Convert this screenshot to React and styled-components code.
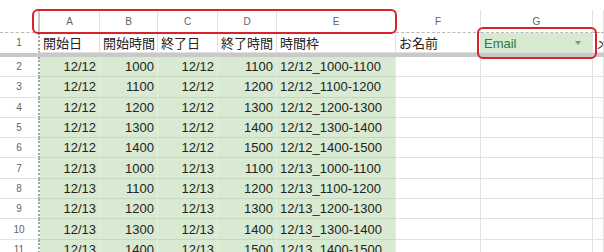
import React from 'react'
import styled, { createGlobalStyle } from 'styled-components'

const GlobalStyle = createGlobalStyle`
  html, body {
    margin: 0;
    padding: 0;
    background: #fff;
    overflow: hidden;
  }
  body {
    font-family: Arial, "Liberation Sans", "Noto Sans CJK JP", sans-serif;
  }
`

const COLS = '40px 60px 58px 60px 59px 119px 85px 112px 1fr'

const Sheet = styled.div`
  position: relative;
  width: 604px;
  height: 252px;
  overflow: hidden;
  padding-top: 10px;
  box-sizing: border-box;
`

const Row = styled.div`
  display: grid;
  grid-template-columns: ${COLS};
  height: ${p => p.$h}px;
`

const ColHead = styled.div`
  box-sizing: border-box;
  display: flex;
  align-items: center;
  justify-content: center;
  font-size: 10px;
  color: #5f6368;
  border-right: ${p => (p.$corner ? '2px solid #c4c4c4' : '1px solid #e1e1e1')};
  border-bottom: 1px dashed #b8b8b8;
`

const RowNum = styled.div`
  box-sizing: border-box;
  display: flex;
  align-items: center;
  justify-content: center;
  font-size: 10px;
  color: #5f6368;
  border-right: 2px dotted #a3a3a3;
  border-bottom: 1px solid ${p => (p.$last ? 'transparent' : '#e1e1e1')};
`

const Cell = styled.div`
  box-sizing: border-box;
  display: flex;
  align-items: center;
  justify-content: ${p => (p.$right ? 'flex-end' : 'flex-start')};
  padding: 0 3px;
  font-size: 13px;
  color: #222;
  white-space: nowrap;
  overflow: hidden;
  background: ${p => (p.$green ? '#d9ead3' : '#fff')};
  border-right: 1px solid ${p => (p.$green ? '#e6efe2' : '#e1e1e1')};
  border-bottom: 1px solid ${p => (p.$green ? '#c6d8bf' : '#e1e1e1')};
`

const Frozen = styled.div`
  height: 4px;
  background: #c9c9c9;
`

const Chip = styled.div`
  box-sizing: border-box;
  display: flex;
  align-items: center;
  justify-content: space-between;
  padding: 0 11px 0 3px;
  font-size: 13px;
  color: #2b7a45;
  background: #d6e9d1;
  border-right: 1px solid #e1e1e1;
`

const Caret = styled.span`
  width: 0;
  height: 0;
  border-left: 3.5px solid transparent;
  border-right: 3.5px solid transparent;
  border-top: 4px solid #7d9a80;
`

const Outline = styled.div`
  position: absolute;
  left: ${p => p.$x}px;
  top: ${p => p.$y}px;
  width: ${p => p.$w}px;
  height: ${p => p.$h}px;
  box-sizing: border-box;
  border: 2px solid #d8232a;
  border-radius: 6px;
  pointer-events: none;
`

const letters = ['A', 'B', 'C', 'D', 'E', 'F', 'G', '']
const titles = ['開始日', '開始時間', '終了日', '終了時間', '時間枠', 'お名前']

const rows = []
const days = ['12/12', '12/13']
days.forEach(d => {
  ;[1000, 1100, 1200, 1300, 1400].forEach(t => {
    rows.push([d, t, d, t + 100, `${d}_${t}-${t + 100}`])
  })
})

function App() {
  return (
    <Sheet>
      <GlobalStyle />
      <Row $h={23}>
        <ColHead $corner />
        {letters.map((l, i) => (
          <ColHead key={i}>{l}</ColHead>
        ))}
      </Row>
      <Row $h={20}>
        <RowNum $last>1</RowNum>
        {titles.map(t => (
          <Cell key={t}>{t}</Cell>
        ))}
        <Chip>
          Email
          <Caret />
        </Chip>
        <Cell>メールアドレス</Cell>
      </Row>
      <Frozen />
      {rows.map((r, i) => (
        <Row $h={20.3} key={i}>
          <RowNum>{i + 2}</RowNum>
          <Cell $green $right>{r[0]}</Cell>
          <Cell $green $right>{r[1]}</Cell>
          <Cell $green $right>{r[2]}</Cell>
          <Cell $green $right>{r[3]}</Cell>
          <Cell $green>{r[4]}</Cell>
          <Cell />
          <Cell />
          <Cell />
        </Row>
      ))}
      <Outline $x={32} $y={9} $w={365} $h={25} />
      <Outline $x={477} $y={27} $w={120} $h={32} />
    </Sheet>
  )
}

export default App
